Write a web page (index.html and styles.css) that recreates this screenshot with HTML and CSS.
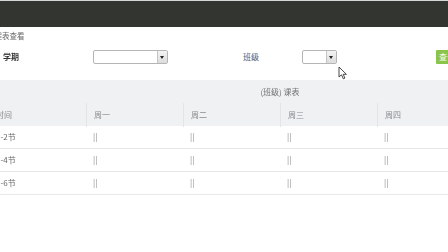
FILE: index.html
```html
<!DOCTYPE html>
<html lang="zh-CN">
<head>
    <meta charset="UTF-8">
    <title>课程表查看</title>
    <link rel="stylesheet" href="styles.css">
</head>
<body>
    <div class="topbar"></div>
    <div class="crumb">课程表查看</div>

    <div class="filter">
        <span class="label term-label">学期</span>
        <div class="fake-select term-select"><span class="arrow"></span></div>
        <span class="label class-label">班级</span>
        <div class="fake-select class-select"><span class="arrow"></span></div>
        <button class="btn-query">查询</button>
    </div>

    <div class="schedule">
        <div class="caption">(班级) 课表</div>
        <div class="row head">
            <div class="cell">时间</div>
            <div class="cell">周一</div>
            <div class="cell">周二</div>
            <div class="cell">周三</div>
            <div class="cell">周四</div>
            <div class="cell">周五</div>
        </div>
        <div class="row">
            <div class="cell time">1-2节</div>
            <div class="cell">||</div><div class="cell">||</div><div class="cell">||</div><div class="cell">||</div><div class="cell">||</div>
        </div>
        <div class="row">
            <div class="cell time">3-4节</div>
            <div class="cell">||</div><div class="cell">||</div><div class="cell">||</div><div class="cell">||</div><div class="cell">||</div>
        </div>
        <div class="row">
            <div class="cell time">5-6节</div>
            <div class="cell">||</div><div class="cell">||</div><div class="cell">||</div><div class="cell">||</div><div class="cell">||</div>
        </div>
    </div>

    <svg class="cursor" width="10" height="14" viewBox="0 0 10 14">
        <path d="M1 1 L1 11 L3.5 8.8 L5.3 12.8 L6.9 12.1 L5.2 8.3 L8.4 8.3 Z" fill="#fff" stroke="#333" stroke-width="0.9" stroke-linejoin="round"/>
    </svg>
</body>
</html>
```

FILE: styles.css
```css
html, body {
    margin: 0;
    padding: 0;
}
body {
    width: 448px;
    height: 252px;
    overflow: hidden;
    position: relative;
    background: #fff;
    font-family: "Noto Sans CJK SC", "Noto Sans", sans-serif;
    color: #555;
}
.topbar {
    height: 26px;
    background-color: #333531;
    border-top: 1px solid #d6d6d6;
}
.crumb {
    margin-left: -13px;
    margin-top: 3px;
    height: 12px;
    line-height: 12px;
    font-size: 7.5px;
    color: #667;
    white-space: nowrap;
    filter: grayscale(1);
}
.filter {
    display: flex;
    align-items: center;
    height: 14px;
    margin-top: 8px;
    white-space: nowrap;
}
.filter > * {flex-shrink: 0;}
.label {
    font-size: 8px;
    line-height: 14px;
}
.term-label {
    margin-left: 3px;
    width: 90px;
    color: #333;
    font-weight: bold;
    filter: grayscale(1);
}
.class-label {
    margin-left: 75px;
    width: 59px;
    color: #4a5a78;
}
.fake-select {
    box-sizing: border-box;
    height: 14px;
    border: 1px solid #b5b5b5;
    border-radius: 2px;
    background: #fff;
    display: flex;
    justify-content: flex-end;
}
.term-select {width: 75px;}
.class-select {width: 35px;}
.arrow {
    width: 9px;
    height: 12px;
    border-left: 1px solid #c4c4c4;
    background: linear-gradient(#f4f4f4, #dcdcdc);
    position: relative;
}
.arrow::after {
    content: "";
    position: absolute;
    left: 2px;
    top: 5px;
    border-left: 2.5px solid transparent;
    border-right: 2.5px solid transparent;
    border-top: 3px solid #222;
}
.btn-query {
    margin-left: 99px;
    height: 14px;
    width: 30px;
    padding: 0 0 0 3px;
    border: none;
    border-radius: 1px;
    background-color: #8bc44a;
    color: #fff;
    font-family: inherit;
    font-size: 8px;
    line-height: 14px;
    text-align: left;
}
.schedule {
    margin-top: 16px;
    margin-left: -11px;
    width: 582px;
    filter: grayscale(0.85);
}
.caption {
    height: 23px;
    line-height: 23px;
    background-color: #eef1f6;
    text-align: center;
    font-size: 8px;
    color: #6b7280;
}
.row {
    display: grid;
    grid-template-columns: repeat(6, 97px);
    height: 22px;
    border-bottom: 1px solid #e8e8ea;
}
.cell {
    padding-left: 7px;
    font-size: 8px;
    line-height: 22px;
    color: #858b98;
}
.row .time {color: #666;}
.row.head {
    height: 23px;
    background-color: #eef1f6;
    border-bottom: none;
}
.row.head .cell {
    line-height: 24px;
    color: #7f8ea6;
}
.row.head .cell + .cell {
    border-left: 1px solid #e2e5ea;
}
.cursor {
    position: absolute;
    left: 338px;
    top: 66px;
}
```
